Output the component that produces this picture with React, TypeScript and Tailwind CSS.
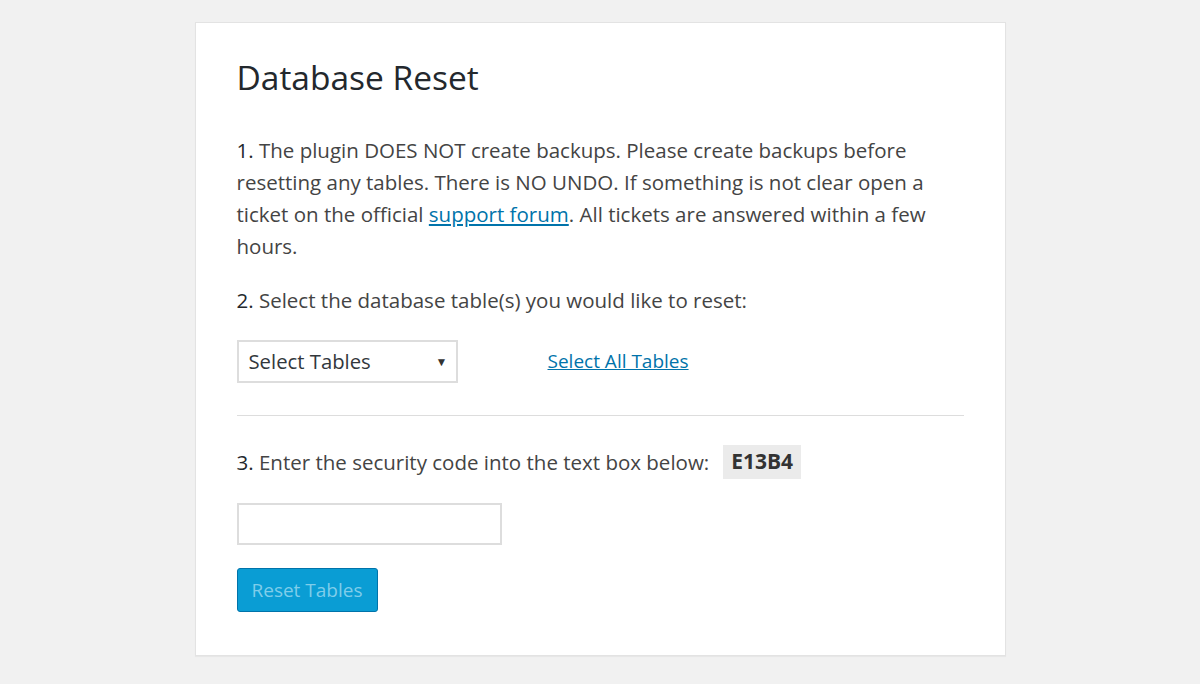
export default function App() {
  return (
    <div className="min-h-[684px] bg-[#f1f1f1] pt-[22px] flex justify-center" style={{ fontFamily: '"Open Sans", "Noto Sans", sans-serif' }}>
      <div className="w-[811px] h-[634px] bg-white border border-[#e3e3e3] shadow-[0_1px_1px_rgba(0,0,0,0.04)] px-[41px] pt-[32px] text-[#444]">
        <h1 className="text-[33.5px] leading-[44px] text-[#23282d] font-normal">Database Reset</h1>

        <p className="mt-[35px] text-[20.5px] leading-[32px] whitespace-nowrap">
          <span className="text-[#23282d]">1.</span> The plugin DOES NOT create backups. Please create backups before
          <br />
          resetting any tables. There is NO UNDO. If something is not clear open a
          <br />
          ticket on the official <a href="#" className="text-[#0073aa] underline">support forum</a>. All tickets are answered within a few
          <br />
          hours.
        </p>

        <p className="mt-[22px] text-[20.5px] leading-[32px]">
          <span className="text-[#23282d]">2.</span> Select the database table(s) you would like to reset:
        </p>

        <div className="mt-[24px] flex items-center">
          <div className="w-[221px] h-[43px] border-2 border-[#ddd] flex items-center justify-between pl-[10px] pr-[8px] text-[20.3px] text-[#32373c]">
            <span>Select Tables</span>
            <span className="text-[12px] text-[#333]">▼</span>
          </div>
          <a href="#" className="ml-[90px] text-[19px] text-[#0073aa] underline">Select All Tables</a>
        </div>

        <div className="mt-[32px] border-t border-[#ddd]" />

        <div className="mt-[29px] flex items-center text-[20.5px]">
          <span><span className="text-[#23282d]">3.</span> Enter the security code into the text box below:</span>
          <span className="ml-[14px] bg-[#ebebeb] px-[8px] h-[34px] flex items-center font-bold text-[#333] text-[21px]">E13B4</span>
        </div>

        <div className="mt-[24px] w-[265px] h-[42px] border-2 border-[#ddd]" />

        <button className="mt-[23px] h-[44px] px-[14px] rounded-[3px] bg-[#0a9dd4] border border-[#0073aa] text-[19px] text-[#7fcdea]">
          Reset Tables
        </button>
      </div>
    </div>
  )
}
